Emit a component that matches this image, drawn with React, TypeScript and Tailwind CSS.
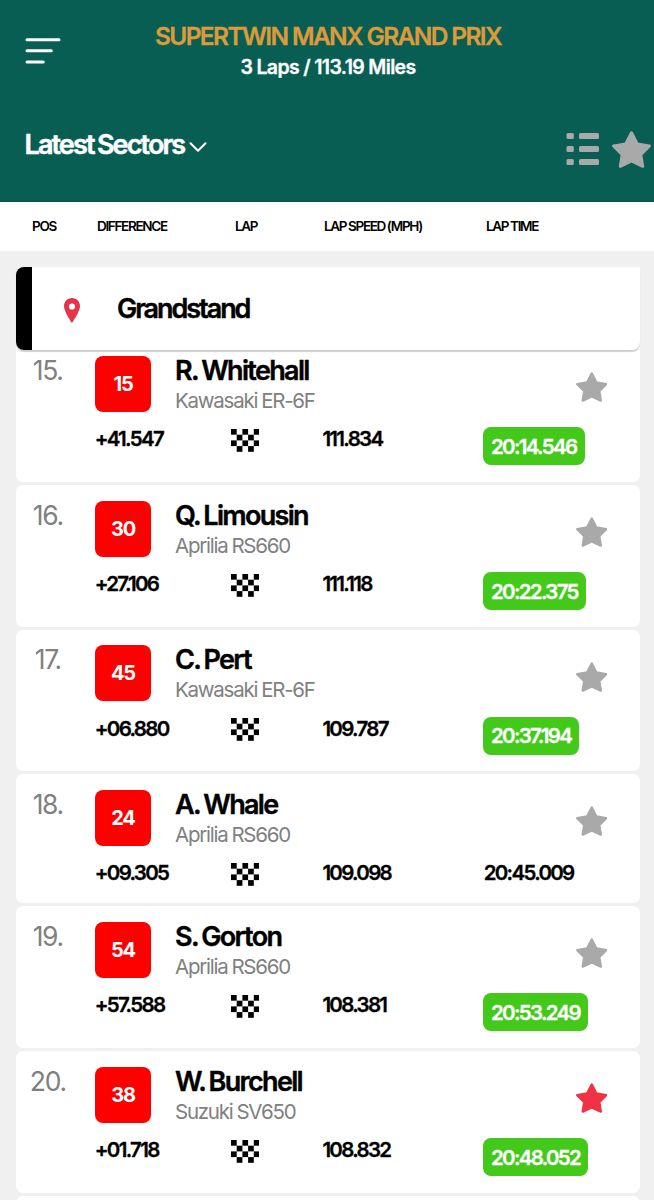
type Rider = {
  pos: number;
  number: number;
  name: string;
  bike: string;
  diff: string;
  speed: string;
  time: string;
  best?: boolean;
  favourite?: boolean;
};

const riders: Rider[] = [
  { pos: 15, number: 15, name: "R. Whitehall", bike: "Kawasaki ER-6F", diff: "+41.547", speed: "111.834", time: "20:14.546", best: true },
  { pos: 16, number: 30, name: "Q. Limousin", bike: "Aprilia RS660", diff: "+27.106", speed: "111.118", time: "20:22.375", best: true },
  { pos: 17, number: 45, name: "C. Pert", bike: "Kawasaki ER-6F", diff: "+06.880", speed: "109.787", time: "20:37.194", best: true },
  { pos: 18, number: 24, name: "A. Whale", bike: "Aprilia RS660", diff: "+09.305", speed: "109.098", time: "20:45.009" },
  { pos: 19, number: 54, name: "S. Gorton", bike: "Aprilia RS660", diff: "+57.588", speed: "108.381", time: "20:53.249", best: true },
  { pos: 20, number: 38, name: "W. Burchell", bike: "Suzuki SV650", diff: "+01.718", speed: "108.832", time: "20:48.052", best: true, favourite: true },
];

function Star({ className }: { className: string }) {
  return (
    <svg viewBox="0 0 39 37" className={className} fill="currentColor" stroke="currentColor" strokeWidth="3" strokeLinejoin="round">
      <path d="M19.5 1.8 L25.3 13 L37.4 14.9 L28.8 23.6 L30.7 35.3 L19.5 30 L8.3 35.3 L10.2 23.6 L1.6 14.9 L13.7 13 Z" />
    </svg>
  );
}

function Flag() {
  const cells = [];
  for (let y = 0; y < 4; y++) {
    for (let x = 0; x < 5; x++) {
      if ((x + y) % 2 === 0) cells.push(<rect key={`${x}-${y}`} x={x * 5.7} y={y * 5.7} width="5.7" height="5.7" />);
    }
  }
  return (
    <svg viewBox="0 0 28.5 22.8" className="ml-[0.8px] mt-[1.8px] h-[22.8px] w-[28.5px]">
      {cells}
    </svg>
  );
}

function RiderCard({ rider }: { rider: Rider }) {
  return (
    <div className={`shrink-0 rounded-[7px] bg-white pt-[15.5px] ${rider.best ? "h-[141.5px]" : "h-[129.2px]"}`}>
      {/* Rider */}
      <div className="flex h-[56px]">
        <div className="w-[63.5px] text-center text-[26.5px] leading-[29px] tracking-[-0.05em] text-[#808080]">{rider.pos}.</div>
        <div className="ml-[15.5px] flex h-[56px] w-[56px] items-center justify-center rounded-[8px] bg-[#fd0000] text-[20px] font-bold tracking-[-0.06em] text-white">
          {rider.number}
        </div>
        <div className="ml-[24px] flex-1 whitespace-nowrap">
          <div className="text-[27px] font-semibold leading-[30px] tracking-[-0.062em] text-black [word-spacing:-1.2px] [-webkit-text-stroke:0.4px]">{rider.name}</div>
          <div className="text-[20.5px] leading-[29px] tracking-[-0.061em] text-[#808080] [word-spacing:-0.5px]">{rider.bike}</div>
        </div>
        <Star className={`mr-[32.5px] mt-[16.5px] h-[30px] w-[31.5px] ${rider.favourite ? "text-[#f13244]" : "text-[#a9a9a9]"}`} />
      </div>

      {/* Sector times */}
      <div className="mt-[15.5px] grid grid-cols-[135.5px_92.2px_160.3px_1fr] pl-[78.7px] text-[20.5px] font-semibold leading-[24px] tracking-[-0.082em] text-black [-webkit-text-stroke:0.3px]">
        <div>{rider.diff}</div>
        <Flag />
        <div>{rider.speed}</div>
        {rider.best ? (
          <div className="flex h-[38px] w-fit items-center rounded-[8px] bg-[#43c91a] px-[8.3px] pt-px text-white">{rider.time}</div>
        ) : (
          <div className="pl-px">{rider.time}</div>
        )}
      </div>
    </div>
  );
}

export default function App() {
  return (
    <div className="flex h-[1200px] w-[654px] flex-col overflow-hidden bg-[#f0f0f0] font-['Inter',sans-serif] [font-optical-sizing:none]">
      {/* Header */}
      <header className="h-[202px] shrink-0 border-b-2 border-[#0b574c] bg-[#095e54]">
        <div className="flex h-[118px]">
          <svg viewBox="0 0 36 26" className="ml-[25px] mt-[38px] h-[26px] w-[36px]" stroke="white" strokeWidth="3" strokeLinecap="round">
            <path d="M2 1.7H34M2 12.7H26.3M2 24H18.3" />
          </svg>
          <div className="ml-[-61px] flex-1 pl-[2px] pt-[20px] text-center">
            <h1 className="text-[24.5px] font-semibold leading-[32px] tracking-[-0.067em] text-[#dd9a3a] [-webkit-text-stroke:0.3px]">SUPERTWIN MANX GRAND PRIX</h1>
            <p className="text-[19.5px] font-semibold leading-[31px] tracking-[-0.033em] text-white [-webkit-text-stroke:0.3px]">3 Laps / 113.19 Miles</p>
          </div>
        </div>
        <div className="flex pl-[24.5px] pr-[3px]">
          <h2 className="text-[27px] font-semibold leading-[54px] tracking-[-0.07em] text-white [word-spacing:-1.5px] [-webkit-text-stroke:0.5px]">Latest Sectors</h2>
          <svg viewBox="0 0 18 11" className="ml-[4.5px] mt-[24px] h-[11px] w-[18px]" fill="none" stroke="white" strokeWidth="2" strokeLinecap="round" strokeLinejoin="round">
            <path d="M1.5 1.2L9 8.7L16.5 1.2" />
          </svg>
          <svg viewBox="0 0 33 33" className="ml-auto mt-[15px] h-[33px] w-[33px]" fill="#a9a9a9">
            {[0, 13, 26].map((y) => (
              <g key={y}>
                <rect x="0.5" y={y} width="7.3" height="6" rx="1.5" />
                <rect x="13" y={y} width="20" height="6" rx="1.5" />
              </g>
            ))}
          </svg>
          <Star className="ml-[13px] mt-[13px] h-[37px] w-[39px] text-[#a9a9a9]" />
        </div>
      </header>

      {/* Column titles */}
      <div className="grid h-[49px] shrink-0 grid-cols-[65px_138px_89px_162px_1fr] items-center whitespace-nowrap bg-white pl-[32px] text-[13.5px] font-semibold tracking-[-0.097em] text-black [word-spacing:-0.3px]">
        <div>POS</div>
        <div>DIFFERENCE</div>
        <div>LAP</div>
        <div>LAP SPEED (MPH)</div>
        <div>LAP TIME</div>
      </div>

      <main className="flex flex-col px-[16px] pt-[16px] pr-[14.5px]">
        {/* Sector */}
        <div className="relative z-10 flex h-[83px] shrink-0 items-center overflow-hidden rounded-l-[8px] rounded-br-[8px] bg-white shadow-[0_2px_1px_#cfcfcf]">
          <div className="h-full w-[16px] bg-black" />
          <svg viewBox="0 0 16 25" className="ml-[32px] mt-[4px] h-[25px] w-[16px]" fill="#e63347" fillRule="evenodd">
            <path d="M8 0C3.5 0 0 3.6 0 8C0 13.7 8 25 8 25S16 13.7 16 8C16 3.6 12.5 0 8 0ZM8 5.4A3.1 3.1 0 1 1 8 11.6A3.1 3.1 0 1 1 8 5.4Z" />
          </svg>
          <div className="ml-[37px] pt-px text-[27px] font-semibold tracking-[-0.076em] text-black [-webkit-text-stroke:0.4px]">Grandstand</div>
        </div>

        <div className="mt-[-9.6px] flex flex-col gap-[3.1px]">
          {riders.map((rider) => (
            <RiderCard key={rider.pos} rider={rider} />
          ))}
          <div className="h-[20px] rounded-[7px] bg-white" />
        </div>
      </main>
    </div>
  );
}
